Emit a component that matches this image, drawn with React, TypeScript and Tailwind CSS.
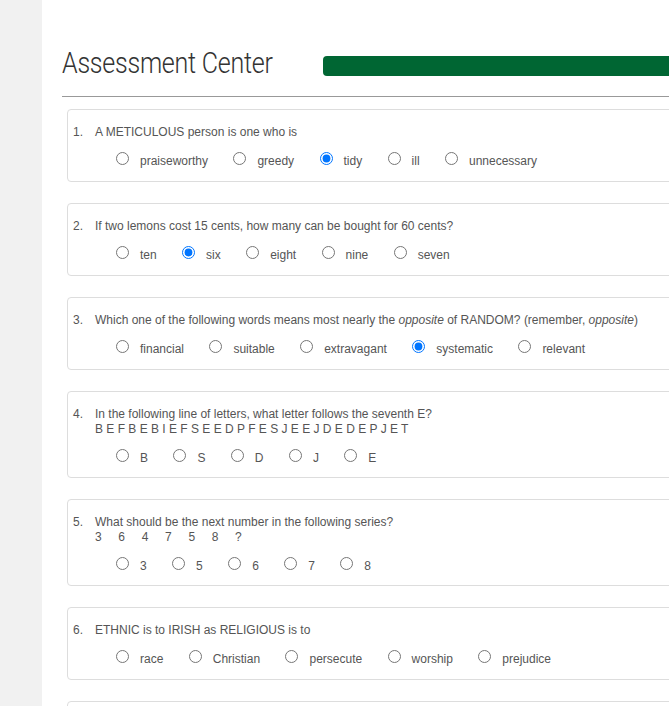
import React from "react";

type Question = {
  num: number;
  text: React.ReactNode;
  extra?: string;
  options: string[];
  answer: number;
};

const questions: Question[] = [
  {
    num: 1,
    text: "A METICULOUS person is one who is",
    options: ["praiseworthy", "greedy", "tidy", "ill", "unnecessary"],
    answer: 2,
  },
  {
    num: 2,
    text: "If two lemons cost 15 cents, how many can be bought for 60 cents?",
    options: ["ten", "six", "eight", "nine", "seven"],
    answer: 1,
  },
  {
    num: 3,
    text: (
      <>
        Which one of the following words means most nearly the <i>opposite</i> of RANDOM? (remember,{" "}
        <i>opposite</i>)
      </>
    ),
    options: ["financial", "suitable", "extravagant", "systematic", "relevant"],
    answer: 3,
  },
  {
    num: 4,
    text: "In the following line of letters, what letter follows the seventh E?",
    extra: "B E F B E B I E F S E E D P F E S J E E J D E D E P J E T",
    options: ["B", "S", "D", "J", "E"],
    answer: -1,
  },
  {
    num: 5,
    text: "What should be the next number in the following series?",
    extra: "3     6     4     7     5     8     ?",
    options: ["3", "5", "6", "7", "8"],
    answer: -1,
  },
  {
    num: 6,
    text: "ETHNIC is to IRISH as RELIGIOUS is to",
    options: ["race", "Christian", "persecute", "worship", "prejudice"],
    answer: -1,
  },
  {
    num: 7,
    text: "Which number should come next in this series? 25, 24, 22, 19, 15",
    options: ["4", "5", "10", "14", "20"],
    answer: -1,
  },
];

function QuestionCard({ q }: { q: Question }) {
  return (
    <div
      className={
        "rounded-[4px] border border-[#dddddd] bg-white pt-[15px] pl-[5px] " +
        (q.extra ? "pb-[9px]" : "pb-[10px]")
      }
    >
      <div className="flex text-[12px] leading-[15px] text-[#555555]">
        <span className="w-[22px] shrink-0">{q.num}.</span>
        <div className="whitespace-nowrap">
          <div>{q.text}</div>
          {q.extra && <div className="whitespace-pre">{q.extra}</div>}
        </div>
      </div>
      <div className="mt-[11px] h-[20px] whitespace-nowrap pl-[43px] text-[12px] leading-[21px] text-[#555555]">
        {q.options.map((opt, i) => (
          <label key={opt} className="mr-[25.4px]">
            <input
              type="radio"
              name={`q${q.num}`}
              defaultChecked={i === q.answer}
              className="m-0 h-[13px] w-[13px] align-baseline"
            />
            <span className="ml-[11px]">{opt}</span>
          </label>
        ))}
      </div>
    </div>
  );
}

export default function App() {
  return (
    <div className="flex h-screen w-full overflow-hidden bg-white font-['Liberation_Sans',Arial,sans-serif]">
      {/* Side strip */}
      <div className="w-[42px] shrink-0 bg-[#f1f1f1]" />

      <main className="min-w-0 flex-1 pl-[20px]">
        <div className="w-[700px]">
          {/* Header */}
          <div className="mt-[43px] flex h-[40px] items-center">
            <div className="w-[261px] shrink-0">
              <h1 className="inline-block origin-left scale-x-[0.835] whitespace-nowrap font-['Roboto',sans-serif] text-[30px] font-light leading-[40px] tracking-[-0.3px] text-[#333333]">
                Assessment Center
              </h1>
            </div>
            <div className="mt-[6px] h-[20px] flex-1 rounded-l-[4px] bg-[#006633]" />
          </div>

          <div className="mt-[13px] h-px bg-[#999999]" />

          <div className="mt-[12px] flex flex-col gap-[21px] pl-[5px]">
            {questions.map((q) => (
              <QuestionCard key={q.num} q={q} />
            ))}
          </div>
        </div>
      </main>
    </div>
  );
}
